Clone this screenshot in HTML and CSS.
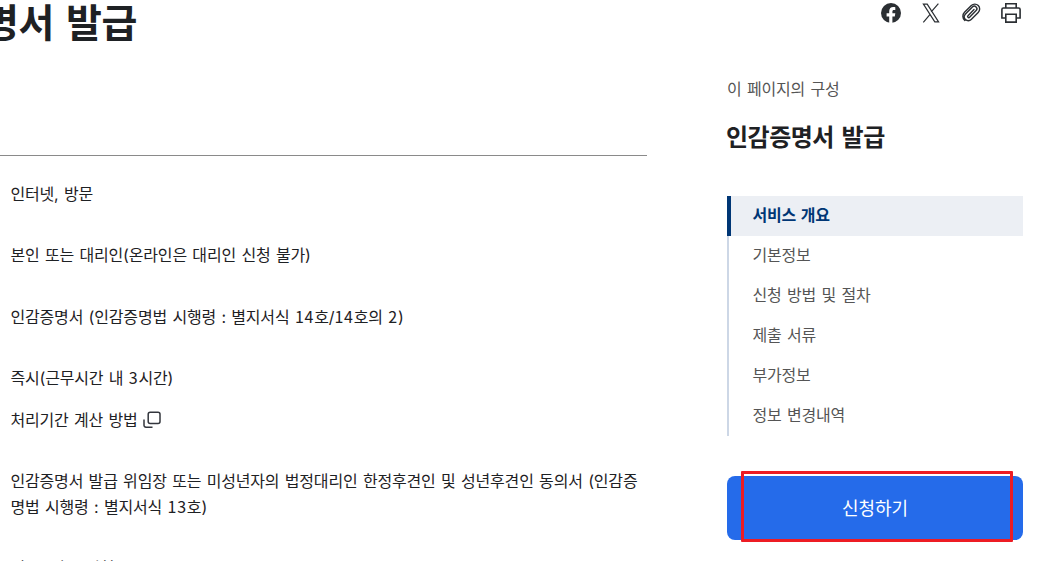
FILE: index.html
```html
<!DOCTYPE html>
<html lang="ko">
<head>
    <meta charset="UTF-8">
    <meta name="viewport" content="width=device-width, initial-scale=1.0">
    <title>인감증명서 발급</title>
    <link rel="stylesheet" href="styles.css">
</head>
<body>
    <div class="page">
        <main class="content">
            <h1 class="page-title">명서 발급</h1>
            <div class="info-list">
                <p>인터넷, 방문</p>
                <p>본인 또는 대리인(온라인은 대리인 신청 불가)</p>
                <p>인감증명서 (인감증명법 시행령 : 별지서식 <span class="num">14</span>호/<span class="num">14</span>호의 <span class="num">2</span>)</p>
                <p class="period">즉시(근무시간 내 <span class="num">3</span>시간)</p>
                <p><a class="popup-link" href="#">처리기간 계산 방법
                    <svg width="18" height="18" viewBox="0 0 18 18" fill="none" stroke="#33363d" stroke-width="1.5">
                        <rect x="5.2" y="1.2" width="11.8" height="11.3" rx="2"/>
                        <path d="M1 8.5v5.7a2 2 0 0 0 2 2h6.5"/>
                    </svg></a></p>
                <p>인감증명서 발급 위임장 또는 미성년자의 법정대리인 한정후견인 및 성년후견인 동의서 (인감증<br>명법 시행령 : 별지서식 <span class="num">13</span>호)</p>
                <p class="fee">있음 (방문 신청 시)</p>
            </div>
        </main>
        <aside class="sidebar">
            <div class="share">
                <a href="#" aria-label="페이스북">
                    <svg width="20" height="20" viewBox="0 0 20 20">
                        <circle cx="10" cy="10" r="10" fill="#2b2f33"/>
                        <path d="M8.2 20v-6.6H5.6v-3.2h2.6V8.3c0-2.8 1.6-4.3 4-4.3.9 0 1.7.1 2.1.2v2.9H13c-1.2 0-1.6.7-1.6 1.5v1.6h2.9l-.5 3.2h-2.4V20z" fill="#fff"/>
                    </svg>
                </a>
                <a href="#" aria-label="엑스">
                    <svg width="20" height="20" viewBox="0 0 20 20" fill="none" stroke="#2b2f33" stroke-width="1.2">
                        <path d="M2.4 1.1h3.8l11.4 17.8h-3.8zM17.4.6l-7.2 8.2M9.3 11.1l-7 8.2"/>
                    </svg>
                </a>
                <a href="#" aria-label="링크 복사">
                    <svg width="20" height="20" viewBox="0 0 20 20" fill="none" stroke="#2b2f33" stroke-width="1.4" stroke-linecap="round">
                        <path d="M13 6.6l-6 6.1a1.1 1.1 0 0 0 1.6 1.6l6.5-6.7a2.6 2.6 0 0 0-3.7-3.7l-6.9 7a4 4 0 0 0 5.7 5.7l7-7.1a4.9 4.9 0 0 0-6.9-7L3.5 9.3a5.5 5.5 0 0 0 .3 8.1"/>
                    </svg>
                </a>
                <a href="#" aria-label="인쇄">
                    <svg width="20" height="20" viewBox="0 0 20 20" fill="none" stroke="#2b2f33" stroke-width="1.6">
                        <path d="M4.8 5V.8h10.4V5M4.8 15H.9V6.5Q.9 5 2.4 5h15.2q1.5 0 1.5 1.5V15h-3.9"/>
                        <path d="M4.8 11.2h10.4v7.9H4.8z"/>
                    </svg>
                </a>
            </div>
            <p class="sidebar-label">이 페이지의 구성</p>
            <h2 class="sidebar-title">인감증명서 발급</h2>
            <nav class="toc">
                <a class="active" href="#">서비스 개요</a>
                <a href="#">기본정보</a>
                <a href="#">신청 방법 및 절차</a>
                <a href="#">제출 서류</a>
                <a href="#">부가정보</a>
                <a href="#">정보 변경내역</a>
            </nav>
            <div class="apply">
                <button type="button">신청하기</button>
                <span class="highlight"></span>
            </div>
        </aside>
    </div>
</body>
</html>
```
FILE: styles.css
```css
* {
    box-sizing: border-box;
}
body {
    margin: 0;
    background: #fff;
    color: #1e2124;
    font-family: Inter, "Noto Sans CJK KR", sans-serif;
    font-size: 16px;
    line-height: 26px;
    letter-spacing: -0.18px;
    word-spacing: 1.1px;
}
h1, h2, p {
    margin: 0;
}
a {
    color: inherit;
    text-decoration: none;
}
.page {
    display: flex;
    gap: 80px;
    width: 1023px;
    height: 561px;
    overflow: hidden;
}
.content {
    width: 647px;
}
.page-title {
    height: 155px;
    margin-left: -17px;
    font-size: 39px;
    line-height: 46px;
    letter-spacing: -0.5px;
    word-spacing: 3.5px;
}
.info-list {
    border-top: 1px solid #8a8a8a;
    padding: 25px 0 0 10.5px;
    white-space: nowrap;
}
.info-list p {
    margin-bottom: 35.3px;
}
.info-list .period {
    margin-bottom: 16px;
}
.num {
    font-family: "Noto Sans CJK KR", sans-serif;
    line-height: 1;
    letter-spacing: 0.8px;
}
.popup-link {
    display: flex;
    align-items: center;
    gap: 5px;
}
.sidebar {
    width: 296px;
}
.share {
    display: flex;
    justify-content: flex-end;
    gap: 20px;
    padding: 3px 2px 0 0;
}
.share a, .share svg {
    display: block;
}
.sidebar-label {
    margin-top: 53px;
    color: #555;
}
.sidebar-title {
    margin: 17px 0 40px -1px;
    font-size: 24px;
    line-height: 37px;
    letter-spacing: -0.5px;
    word-spacing: 2.5px;
}
.toc a {
    display: block;
    height: 40px;
    border-left: 2px solid #cdd7e6;
    padding-left: 23.5px;
    color: #555;
    line-height: 38px;
}
.toc .active {
    border-left: 4px solid #003675;
    padding-left: 21.5px;
    background: #eceff4;
    color: #003675;
    font-weight: bold;
}
.apply {
    position: relative;
    margin-top: 40px;
}
.apply button {
    display: block;
    width: 100%;
    height: 64px;
    border: 0;
    border-radius: 8px;
    padding-bottom: 4px;
    background: #256bea;
    color: #fff;
    font-family: inherit;
    font-size: 18px;
}
/* red frame over the button */
.highlight {
    position: absolute;
    top: -5px;
    left: 14px;
    width: 272px;
    height: 71px;
    border: 3px solid #ed1c24;
    border-radius: 1px;
}
```
